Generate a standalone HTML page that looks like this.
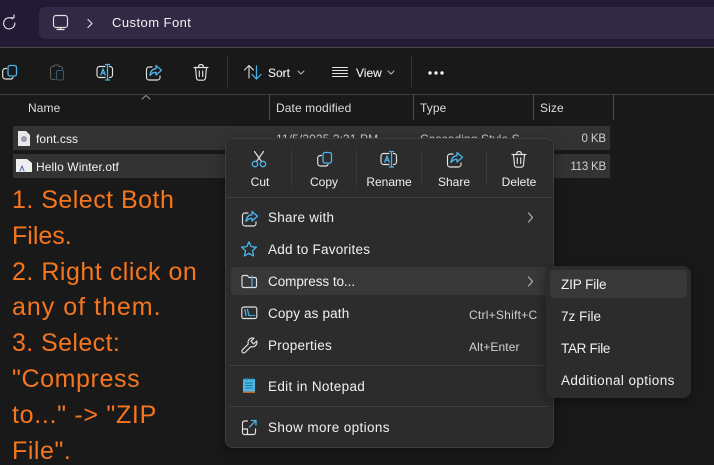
<!DOCTYPE html>
<html><head><meta charset="utf-8">
<style>
html,body{margin:0;padding:0;background:#191919}
#r{position:relative;width:714px;height:465px;overflow:hidden;background:#191919;font-family:"Liberation Sans",sans-serif;color:#f0f0f0}
#r div{position:absolute}
.t{white-space:nowrap;font-size:13.5px;line-height:16px;letter-spacing:.25px}
.c{text-align:center;width:70px;font-size:12px;letter-spacing:0}
.h{font-size:12px;color:#dcdcdc;top:100px;letter-spacing:.1px}
.v{width:1px;top:95px;height:25px;background:#4f4f4f}
.o{left:12px;font-size:25px;line-height:30px;color:#f5761f;white-space:nowrap;letter-spacing:.4px}
.sep{height:1px;background:#3e3e3e}
svg{position:absolute;overflow:visible;fill:none;stroke-linecap:round;stroke-linejoin:round}
.g{stroke:#e2e2e2;stroke-width:1.15}
.b{stroke:#4cb4ea;stroke-width:1.3}
</style></head><body><div id="r">
<svg width="0" height="0" style="position:absolute"><defs>
<symbol id="copy" viewBox="0 0 20 20" overflow="visible"><rect class="b" x="8" y="2.500" width="8.500" height="10.500" rx="2"/><path class="g" d="M6.500 5.500H5.200A2.500 2.500 0 0 0 2.700 8v5.500A2.500 2.500 0 0 0 5.200 16H10.500A2.500 2.500 0 0 0 13 14.500"/></symbol>
<symbol id="ren" viewBox="0 0 20 20" overflow="visible"><path class="g" d="M10 3.500H4.500a2.500 2.500 0 0 0-2.500 2.500v6a2.500 2.500 0 0 0 2.500 2.500H10M14.500 3.500h.5a2.500 2.500 0 0 1 2.500 2.500v6a2.500 2.500 0 0 1-2.500 2.500h-.5"/><path class="b" d="M10.500 1.500h4M12.500 1.500v15.500M10.500 17h4M5.800 12l2.200-6 2.200 6M6.500 10.200h3"/></symbol>
<symbol id="share" viewBox="0 0 20 20" overflow="visible"><path class="g" d="M8 4H5a2.500 2.500 0 0 0-2.500 2.500v8A2.500 2.500 0 0 0 5 17h8.500a2.500 2.500 0 0 0 2.500-2.500V13"/><path class="b" d="M12 2.500l5.500 4.800-5.500 4.700V9.300C9.500 9.300 7.500 10.300 6 12.500c.3-4 2.500-6.500 6-6.800z"/></symbol>
<symbol id="del" viewBox="0 0 20 20" overflow="visible"><path class="g" d="M3 4.500h14M7.500 4.500C7.500 2.500 8.500 1.500 10 1.500s2.500 1 2.500 3M4.500 4.500l1 10.500a2.500 2.500 0 0 0 2.500 2.200h4a2.500 2.500 0 0 0 2.500-2.200l1-10.500M8.300 8v5.500M11.700 8v5.500"/></symbol>
</defs></svg>

<!-- title bar -->
<div style="left:0;top:0;width:714px;height:47px;background:#231b36"></div>
<div style="left:39px;top:7px;width:675px;height:32px;background:#322a45;border-radius:6px 0 0 6px"></div>
<div style="left:0;top:47px;width:714px;height:1px;background:#4a4a4a"></div>
<svg style="left:0;top:0" width="100" height="47"><path class="g" d="M12.500 18.800A5.600 5.600 0 1 0 14.800 23M10.800 17.800h3.200v-2.800"/><rect class="g" x="53.500" y="15.500" width="14" height="12" rx="2.500"/><path class="g" d="M57 29.500h7M60.500 27.500v2"/><path stroke="#dcdcdc" stroke-width="1.200" d="M88 19.500l4 4-4 4"/></svg>
<div class="t" style="left:112px;top:15px;font-size:13px;color:#f2f2f2;letter-spacing:.45px">Custom Font</div>

<!-- toolbar -->
<svg style="left:0;top:63px" width="20" height="20"><use href="#copy"/></svg>
<svg style="left:48px;top:63px" width="20" height="20"><path stroke="#5c5c5c" stroke-width="1.100" d="M6 3.500H4.500A2 2 0 0 0 2.500 5.500v9a2 2 0 0 0 2 2H7M11 3.500h1.500a2 2 0 0 1 2 2V7M6 3.500a1.500 1.500 0 0 1 1.500-1.500h2A1.500 1.500 0 0 1 11 3.500"/><rect x="8.500" y="7.500" width="7" height="9.500" rx="1.500" stroke="#2f5870" stroke-width="1.100"/></svg>
<svg style="left:95px;top:63px" width="20" height="20"><use href="#ren"/></svg>
<svg style="left:144px;top:63px" width="20" height="20"><use href="#share"/></svg>
<svg style="left:191px;top:63px" width="20" height="20"><use href="#del"/></svg>
<div style="left:227px;top:56px;width:1px;height:31px;background:#333"></div>
<svg style="left:243px;top:63px" width="20" height="20"><path stroke="#dcdcdc" stroke-width="1.100" d="M1.500 7L6 2.500 10.500 7M6 2.500V15"/><path stroke="#4cb4ea" stroke-width="1.200" d="M9 11.500l4.500 4.500 4.500-4.500M13.500 16V3"/></svg>
<div class="t" style="left:268px;top:65px;font-size:12px;letter-spacing:0;color:#f2f2f2;-webkit-text-stroke:.1px #f2f2f2">Sort</div>
<svg style="left:297px;top:70px" width="8" height="6"><path stroke="#bbb" d="M1 1l3 3 3-3"/></svg>
<svg style="left:332px;top:66px" width="17" height="12"><path stroke="#e6e6e6" stroke-width="1" d="M.5 1.500h15M.5 4.500h15M.5 7.500h15M.5 10.500h15"/></svg>
<div class="t" style="left:356px;top:65px;font-size:12px;letter-spacing:0;color:#f2f2f2;-webkit-text-stroke:.1px #f2f2f2">View</div>
<svg style="left:387px;top:70px" width="8" height="6"><path stroke="#bbb" d="M1 1l3 3 3-3"/></svg>
<div style="left:411px;top:56px;width:1px;height:31px;background:#333"></div>
<svg style="left:428px;top:70px" width="18" height="6"><circle cx="2" cy="3" r="1.700" fill="#f0f0f0"/><circle cx="8" cy="3" r="1.700" fill="#f0f0f0"/><circle cx="14" cy="3" r="1.700" fill="#f0f0f0"/></svg>

<!-- header -->
<div style="left:0;top:94px;width:714px;height:1px;background:#3f3f3f"></div>
<svg style="left:141px;top:94px" width="10" height="6"><path stroke="#9a9a9a" d="M1 5l4-3.500L9 5"/></svg>
<div class="t h" style="left:28px">Name</div>
<div class="t h" style="left:276px">Date modified</div>
<div class="t h" style="left:420px">Type</div>
<div class="t h" style="left:540px">Size</div>
<div class="v" style="left:269px"></div><div class="v" style="left:413px"></div><div class="v" style="left:533px"></div><div class="v" style="left:613px"></div>

<!-- rows -->
<div style="left:13px;top:126px;width:597px;height:24px;background:#333"></div>
<div style="left:13px;top:154px;width:597px;height:24px;background:#333"></div>
<svg style="left:18px;top:131px" width="12" height="15"><path fill="#e8e8ea" d="M0 0h8l4 4v11H0z"/><circle cx="6" cy="8" r="3" fill="#9a9aa8"/></svg>
<svg style="left:16px;top:159px" width="16" height="13"><path fill="#eeeeee" d="M0 0h11l5 4v9H0z"/><path stroke="#3a62b8" stroke-width="1" d="M4 12l2-5 2 5"/></svg>
<div class="t" style="left:36px;top:131px;font-size:12px;letter-spacing:.1px;color:#f5f5f5">font.css</div>
<div class="t" style="left:36px;top:159px;font-size:12px;letter-spacing:.1px;color:#f5f5f5">Hello Winter.otf</div>
<div class="t" style="left:276px;top:131px;font-size:12px;letter-spacing:.1px;color:#d0d0d0">11/5/2025 2:31 PM</div>
<div class="t" style="left:420px;top:131px;font-size:12px;letter-spacing:.1px;color:#d0d0d0">Cascading Style S</div>
<div class="t" style="left:560px;top:131px;width:46px;text-align:right;font-size:11.500px;letter-spacing:-.1px;color:#d0d0d0">0 KB</div>
<div class="t" style="left:560px;top:159px;width:46px;text-align:right;font-size:11.500px;letter-spacing:-.2px;color:#d0d0d0">113 KB</div>

<!-- orange text -->
<div class="o" style="top:185px;letter-spacing:.48px">1. Select Both</div>
<div class="o" style="top:221px;letter-spacing:0">Files.</div>
<div class="o" style="top:257px;letter-spacing:.52px">2. Right click on</div>
<div class="o" style="top:292px;letter-spacing:1px">any of them.</div>
<div class="o" style="top:328px">3. Select:</div>
<div class="o" style="top:364px;letter-spacing:.6px">"Compress</div>
<div class="o" style="top:400px;letter-spacing:.7px">to..." -&gt; "ZIP</div>
<div class="o" style="top:436px;letter-spacing:.55px">File".</div>

<!-- context menu -->
<div style="left:225px;top:138px;width:327px;height:308px;background:#2c2c2c;border:1px solid #3d3d3d;border-radius:8px;box-shadow:0 4px 14px rgba(0,0,0,.35)"></div>
<svg style="left:249px;top:150px" width="20" height="20"><path class="g" d="M5.500 1.500L12.500 11.500M14.500 1.500L7.500 11.500"/><circle class="b" cx="6" cy="14" r="2.700"/><circle class="b" cx="14" cy="14" r="2.700"/></svg>
<svg style="left:314.500px;top:150px" width="20" height="20"><use href="#copy"/></svg>
<svg style="left:379px;top:150px" width="20" height="20"><use href="#ren"/></svg>
<svg style="left:445px;top:150px" width="20" height="20"><use href="#share"/></svg>
<svg style="left:509px;top:150px" width="20" height="20"><use href="#del"/></svg>
<div class="t c" style="left:225px;top:174px">Cut</div>
<div class="t c" style="left:289px;top:174px">Copy</div>
<div class="t c" style="left:354px;top:174px">Rename</div>
<div class="t c" style="left:419px;top:174px">Share</div>
<div class="t c" style="left:484px;top:174px">Delete</div>
<div style="left:291px;top:150px;width:1px;height:36px;background:#3a3a3a"></div>
<div style="left:356px;top:150px;width:1px;height:36px;background:#3a3a3a"></div>
<div style="left:421px;top:150px;width:1px;height:36px;background:#3a3a3a"></div>
<div style="left:486px;top:150px;width:1px;height:36px;background:#3a3a3a"></div>
<div class="sep" style="left:226px;top:197px;width:326px"></div>

<div style="left:231px;top:267px;width:317px;height:28px;background:#383838;border-radius:4px"></div>
<svg style="left:240px;top:209px" width="20" height="20"><use href="#share"/></svg>
<svg style="left:240px;top:240px" width="18" height="18"><path class="b" d="M9 1.800l2.200 4.800 5.200.6-3.900 3.500 1.100 5.200L9 13.300l-4.600 2.600 1.100-5.200L1.600 7.200l5.200-.6z"/></svg>
<svg style="left:241px;top:273px" width="18" height="18"><path class="g" d="M1 4a1.500 1.500 0 0 1 1.500-1.500h3.800L8 4.500h6A1.500 1.500 0 0 1 15.500 6v7a1.500 1.500 0 0 1-1.500 1.500H2.500A1.500 1.500 0 0 1 1 13z"/><path class="b" stroke-dasharray="2 1" d="M11 3v11.500"/></svg>
<svg style="left:241px;top:306px" width="18" height="15"><rect class="g" x=".8" y="1" width="15" height="11.500" rx="2"/><path class="b" d="M4 3.500l1 6M6.500 3.500l1.500 6M9 9.500h.5M11 9.500h.5M13 9.500h.5"/></svg>
<svg style="left:241px;top:337px" width="17" height="17"><path class="g" d="M11.500 1a4.500 4.500 0 0 0-4.200 6L1.500 12.800a1.800 1.800 0 0 0 2.600 2.600L9.900 9.600A4.500 4.500 0 0 0 15.700 4l-3 3L10 4.200l3-3A4.500 4.500 0 0 0 11.500 1z"/></svg>
<svg style="left:242px;top:377px" width="14" height="18"><path fill="#4cb8e4" d="M1 2h12v13H1z"/><path fill="#c4662c" d="M1 14.500h12V16H1z"/><path stroke="#1d6f96" d="M3.500 6h7M3.500 8.500h7M3.500 11h7"/><path stroke="#2a7da5" d="M3 1v2M5.500 1v2M8 1v2M10.500 1v2"/></svg>
<svg style="left:241px;top:419px" width="17" height="17"><path class="g" d="M6.500 2H3.500A2 2 0 0 0 1.500 4v9.500a2 2 0 0 0 2 2h9a2 2 0 0 0 2-2V10M1.500 10h5v5.500"/><path class="b" d="M8.500 8L15 1.500M10.500 1.500H15V6"/></svg>

<div class="t" style="left:268px;top:210px">Share with</div>
<div class="t" style="left:268px;top:242px">Add to Favorites</div>
<div class="t" style="left:268px;top:274px;letter-spacing:-.05px">Compress to...</div>
<div class="t" style="left:268px;top:306px;letter-spacing:.15px">Copy as path</div>
<div class="t" style="left:268px;top:338px">Properties</div>
<div class="t" style="left:268px;top:379px;letter-spacing:.32px">Edit in Notepad</div>
<div class="t" style="left:268px;top:420px;letter-spacing:.37px">Show more options</div>
<svg style="left:527px;top:212px" width="8" height="11"><path stroke="#b8b8b8" stroke-width="1.100" d="M1.500 1l4 4.500-4 4.500"/></svg>
<svg style="left:527px;top:276px" width="8" height="11"><path stroke="#b8b8b8" stroke-width="1.100" d="M1.500 1l4 4.500-4 4.500"/></svg>
<div class="t" style="left:469px;top:307px;font-size:12px;letter-spacing:.25px;color:#cfcfcf">Ctrl+Shift+C</div>
<div class="t" style="left:469px;top:339px;font-size:12px;letter-spacing:.1px;color:#cfcfcf">Alt+Enter</div>
<div class="sep" style="left:229px;top:365px;width:320px"></div>
<div class="sep" style="left:229px;top:406px;width:320px"></div>

<!-- submenu -->
<div style="left:546px;top:266px;width:145px;height:132px;background:#2c2c2c;border-radius:8px;box-shadow:0 3px 12px rgba(0,0,0,.4)"></div>
<div style="left:550px;top:270px;width:137px;height:28px;background:#383838;border-radius:4px"></div>
<div class="t" style="left:561px;top:277px;letter-spacing:-.1px">ZIP File</div>
<div class="t" style="left:561px;top:309px;letter-spacing:.05px">7z File</div>
<div class="t" style="left:561px;top:341px;letter-spacing:-.3px">TAR File</div>
<div class="t" style="left:561px;top:373px;letter-spacing:.4px">Additional options</div>
</div></body></html>
